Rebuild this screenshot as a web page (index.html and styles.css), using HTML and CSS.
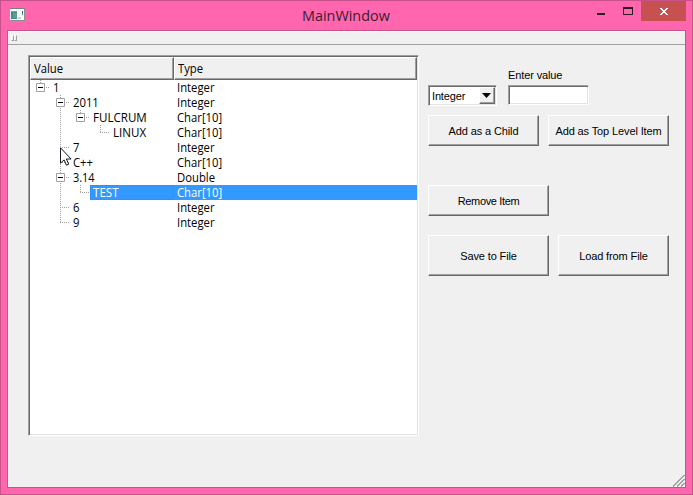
FILE: index.html
```html
<!DOCTYPE html>
<html lang="en">
<head>
<meta charset="utf-8">
<title>MainWindow</title>
<link rel="stylesheet" href="styles.css">
</head>
<body>
<div class="window">
  <header class="titlebar">
    <svg class="app-icon" width="15" height="13" viewBox="0 0 15 13" shape-rendering="crispEdges">
      <rect width="15" height="13" fill="#8a8f94"/>
      <rect y="1" width="14" height="11" fill="#f8f8f8"/>
      <rect width="15" height="1" fill="#75837e"/>
      <rect x="1" y="3" width="6" height="8" fill="#4d8595"/>
      <rect x="1" y="3" width="6" height="1" fill="#7f9fb5"/>
      <rect x="3" y="5" width="4" height="5" fill="#55a583"/>
      <rect x="8" y="9" width="3" height="2" fill="#ccc"/>
      <rect x="12" y="3" width="1" height="2" fill="#2857a5"/>
      <rect x="12" y="5" width="1" height="2" fill="#46a050"/>
    </svg>
    <h1 class="title"><span>MainWindow</span></h1>
    <div class="controls">
      <svg width="101" height="20" viewBox="0 0 101 20" shape-rendering="crispEdges">
        <rect x="56" width="45" height="20" fill="#c75050"/>
        <rect x="12" y="12" width="8" height="2" fill="#2b1c24"/>
        <path d="M38 6h10v8H38zM39 8v5h8V8z" fill="#2b1c24" fill-rule="evenodd"/>
        <path d="M75 7h2v1h1v1h2V8h1V7h2v1h-1v1h-1v1h-1v1h1v1h1v1h1v1h-2v-1h-1v-1h-2v1h-1v1h-2v-1h1v-1h1v-1h1v-1h-1V9h-1V8h-1z" fill="#fff"/>
      </svg>
    </div>
  </header>
  <main class="client">
    <div class="toolbar"><i class="grip"></i><i class="grip"></i></div>
    <div class="content">
      <section class="tree">
        <div class="tree-head"><span class="head-value"><b>Value</b></span><span class="head-type"><b>Type</b></span></div>
        <div class="row l1"><span class="value"><b>1</b></span><span class="type"><b>Integer</b></span></div>
        <div class="row l2"><span class="value"><b>2011</b></span><span class="type"><b>Integer</b></span></div>
        <div class="row l3"><span class="value"><b class="caps">FULCRUM</b></span><span class="type"><b>Char[10]</b></span></div>
        <div class="row l4"><span class="value"><b class="caps">LINUX</b></span><span class="type"><b>Char[10]</b></span></div>
        <div class="row l2"><span class="value"><b>7</b></span><span class="type"><b>Integer</b></span></div>
        <div class="row l2"><span class="value"><b>C++</b></span><span class="type"><b>Char[10]</b></span></div>
        <div class="row l2"><span class="value"><b class="number">3.14</b></span><span class="type"><b>Double</b></span></div>
        <div class="row l3 selected"><span class="value"><b class="caps">TEST</b></span><span class="type"><b>Char[10]</b></span></div>
        <div class="row l2"><span class="value"><b>6</b></span><span class="type"><b>Integer</b></span></div>
        <div class="row l2"><span class="value"><b>9</b></span><span class="type"><b>Integer</b></span></div>
        <svg class="branches" width="145" height="150" viewBox="0 0 145 150">
          <g fill="none" stroke="#a0a0a0" stroke-dasharray="1 1">
            <path d="M10.5 0v3M16 7.5h4M30.5 15v3M30.5 28v65M36 22.5h4M50.5 30v3M56 37.5h4M70.5 45v8M70 52.5h10M32 67.5h8M32 82.5h8M36 97.5h4M30.5 103v40M50.5 105v8M50 112.5h10M30 127.5h10M30 142.5h10"/>
          </g>
          <g fill="#fff" stroke="#a0a0a0">
            <path d="M6.5 3.5h8v8h-8zM26.5 18.5h8v8h-8zM46.5 33.5h8v8h-8zM26.5 93.5h8v8h-8z"/>
          </g>
          <path d="M8 7.5h5M28 22.5h5M48 37.5h5M28 97.5h5" stroke="#000"/>
          <path d="M60 105.5h84M60 119.5h84M60.5 105v15M143.5 105v15" fill="none" stroke="#cc6600" stroke-dasharray="1 1"/>
        </svg>
        <svg class="cursor" width="12" height="19" viewBox="0 0 12 19">
          <path d="M.5.8v15.4l3.6-3.3 2.3 5.3 2.3-1-2.3-5.2h4.7z" fill="#fff" stroke="#171722"/>
        </svg>
      </section>
      <section class="panel">
        <div class="fields">
          <div class="combo"><span>Integer</span><i class="drop"><svg width="9" height="5" viewBox="0 0 9 5"><path d="M0 0h9L4.5 5z"/></svg></i></div>
          <label class="field"><span>Enter value</span><input class="edit" type="text"></label>
        </div>
        <div class="buttons add"><button>Add as a Child</button><button class="wide">Add as Top Level Item</button></div>
        <div class="buttons remove"><button class="wide tight">Remove Item</button></div>
        <div class="buttons files"><button class="wide">Save to File</button><button>Load from File</button></div>
      </section>
      <svg class="size-grip" width="12" height="12" viewBox="0 0 12 12" shape-rendering="crispEdges">
        <path d="M0 11.5L11.5 0M4 11.5L11.5 4M8 11.5L11.5 8" stroke="#a0a0a0" stroke-width="1.5"/>
      </svg>
    </div>
  </main>
</div>
</body>
</html>
```
FILE: styles.css
```css
* { box-sizing: border-box; }
body { margin: 0; }
.window {
  width: 693px; height: 495px; padding: 0 6px 6px;
  border: 1px solid #c9518b; background: #ff66ae;
  display: flex; flex-direction: column;
}
.titlebar { height: 29px; display: flex; align-items: flex-start; flex: none; }
.app-icon { margin: 7px 0 0 3px; flex: none; }
.title {
  flex: 1; margin: 0; padding: 4px 0 0 277px; font: 15px/21px "Open Sans", sans-serif;
  color: #3a1d2d; white-space: nowrap;
}
.title span { display: inline-block; transform: scaleX(.96); transform-origin: left; }
.controls { width: 101px; height: 20px; flex: none; }
.controls svg { display: block; }
.client {
  flex: 1; border: 1px solid #c9518b; background: #f0f0f0;
  display: flex; flex-direction: column; min-height: 0;
}
.toolbar {
  height: 14px; flex: none; border-top: 1px solid #fff; border-bottom: 1px solid #a0a0a0;
  display: flex; padding: 3px 0 0 3px;
}
.grip { width: 3px; height: 6px; border: 1px solid #a0a0a0; border-top-color: #fff; border-left-color: #fff; }
.content { position: relative; flex: 1; display: flex; align-items: flex-start; padding: 10px 0 0 20px; }
.tree {
  position: relative; width: 391px; height: 381px; background: #fff; padding: 1px;
  border: 1px solid; border-color: #a0a0a0 #fff #fff #a0a0a0;
  box-shadow: inset 1px 1px #696969, inset -1px -1px #e3e3e3;
  font: 12px/15px "Open Sans", sans-serif; color: #000;
}
.tree b { font-weight: 400; display: inline-block; transform: scaleX(.94); transform-origin: left; white-space: nowrap; }
.tree .caps { transform: scaleX(.965); }
.tree .number { transform: scaleX(.91); }
.tree-head { display: flex; height: 23px; line-height: 22px; }
.tree-head span {
  background: #f0f0f0; border: 1px solid; border-color: #fff #696969 #696969 #fff;
  box-shadow: inset -1px -1px #a0a0a0; padding-left: 3px;
}
.head-value { width: 144px; }
.head-type { flex: 1; }
.row { display: flex; height: 15px; }
.l1 { padding-left: 20px; }
.l2 { padding-left: 40px; }
.l3 { padding-left: 60px; }
.l4 { padding-left: 80px; }
.value { flex: 1; padding-left: 3px; }
.type { width: 243px; padding-left: 3px; }
.selected .value, .selected .type { background: #3399ff; color: #fff; }
.branches { position: absolute; left: 1px; top: 24px; }
.cursor { position: absolute; left: 31px; top: 91px; }
.panel { width: 241px; margin-left: 9px; font: 11px/13px "Liberation Sans", Arial, sans-serif; color: #000; }
.fields { display: flex; align-items: flex-start; height: 60px; }
.combo {
  width: 69px; height: 21px; margin: 30px 11px 0 0; display: flex; padding: 1px; background: #fff;
  border: 1px solid; border-color: #a0a0a0 #fff #fff #a0a0a0;
  box-shadow: inset 1px 1px #696969, inset -1px -1px #e3e3e3;
}
.combo span { flex: 1; padding: 3px 0 0 2px; letter-spacing: -.15px; }
.drop {
  width: 16px; background: #f0f0f0; border: 1px solid; border-color: #fff #696969 #696969 #fff;
  box-shadow: inset -1px -1px #a0a0a0; display: flex; justify-content: center; padding: 5px 1px 0 0;
}
.field { display: flex; flex-direction: column; width: 81px; padding-top: 14px; letter-spacing: -.12px; }
.field span { height: 16px; }
.edit {
  width: 81px; height: 20px; background: #fff; border: 1px solid;
  border-color: #a0a0a0 #fff #fff #a0a0a0; padding: 0 3px; outline: 0;
  box-shadow: inset 1px 1px #696969, inset -1px -1px #e3e3e3;
}
.buttons { display: flex; gap: 9px; }
.buttons button {
  width: 111px; height: 31px; padding: 2px 0 0; background: #f0f0f0; border: 1px solid;
  border-color: #fff #696969 #696969 #fff; box-shadow: inset -1px -1px #a0a0a0;
  font: inherit; color: #000; border-radius: 0; white-space: nowrap; letter-spacing: -.12px;
}
.buttons .wide { width: 121px; }
.buttons .tight { letter-spacing: -.35px; }
.remove { margin-top: 39px; }
.files { margin-top: 19px; }
.buttons.files button { height: 41px; }
.size-grip { position: absolute; right: 0; bottom: 0; }
```
